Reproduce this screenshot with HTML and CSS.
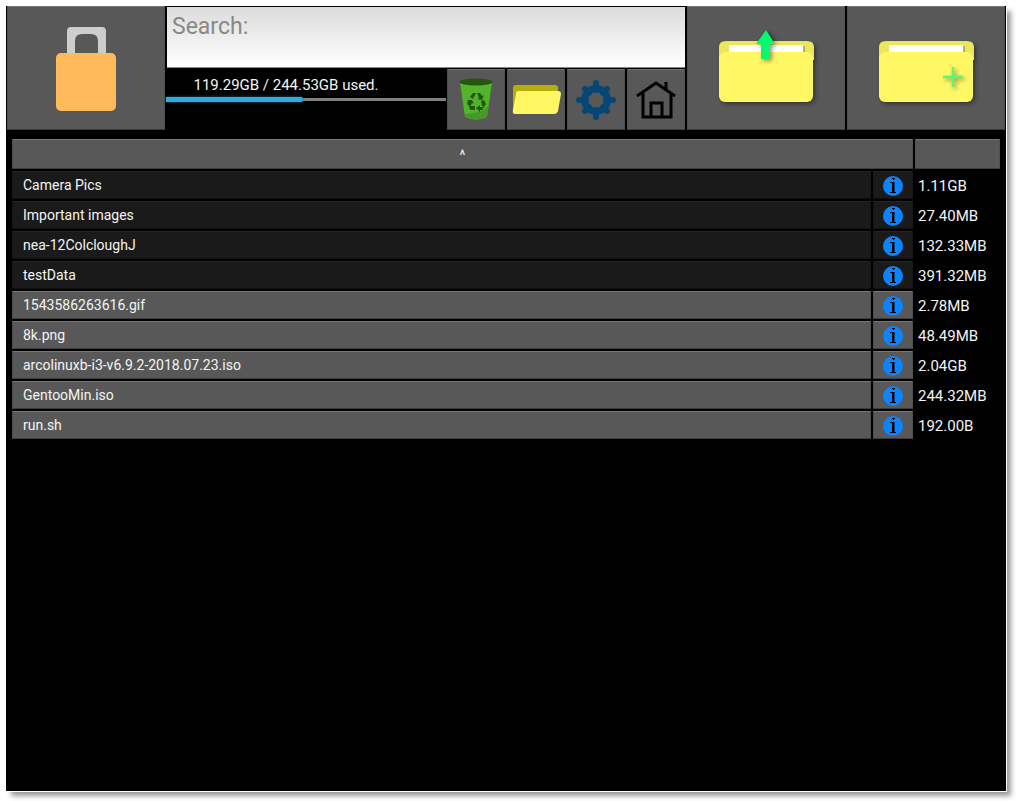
FILE: index.html
```
<!DOCTYPE html>
<html lang="en">
<head>
<meta charset="utf-8">
<title>File browser</title>
<link rel="stylesheet" href="styles.css">
</head>
<body>
<svg class="defs" aria-hidden="true">
  <symbol id="info" viewBox="0 0 20 20">
    <circle cx="10" cy="10" r="10" fill="#0a84ff"/>
    <path d="M9 2h3v1h-1v1h-1V3H9zM7 6h4.500v10H13v1H7v-1h2V7H7z" fill="#000"/>
  </symbol>
  <symbol id="folder" viewBox="0 0 96 66">
    <path d="M0 20V7q0-6 7-6h81q7 0 7 6v13z" fill="#ebe65c"/>
    <path d="M12 6h74v10H12z" fill="#b9b44c"/>
    <path d="M10 5h74v12H10z" fill="#fff"/>
    <rect y="12" width="94" height="50" rx="6" fill="#fff764"/>
  </symbol>
</svg>
<main class="app">
  <header class="toolbar">
    <button class="btn large" aria-label="Lock">
      <svg width="60" height="84" viewBox="0 0 60 84"><path d="M11 28V4q0-4 4-4h31q4 0 4 4v24h-8V14q0-7-7-7H26q-7 0-7 7v14z" fill="#cdcdcd"/><rect y="26" width="60" height="58" rx="5" fill="#ffbb5b"/></svg>
    </button>
    <div class="middle">
      <input class="search" type="text" placeholder="Search:" aria-label="Search">
      <div class="tools">
        <div class="usage">
          <label class="usage-text" for="space">119.29GB / 244.53GB used.</label>
          <progress id="space" class="bar" value="119.29" max="244.53"></progress>
        </div>
        <button class="btn" aria-label="Recycle bin">
          <svg width="34" height="44" viewBox="0 0 34 44"><path d="M1 4h32l-5 35q-11 5-22 0z" fill="#51b42b"/><path d="M30 26q-4 9-24 10v3q11 5 22 0z" fill="#44992a"/><ellipse cx="17" cy="4" rx="16.500" ry="3.500" fill="#26550f"/><path d="M14 15h3l-3 6-3-2zM18 15h3l2 3 2-1-2 5-5-1 2-1zM8 22l5 0 2 4-2-1-2 4-3-3 1-3zM22 23l3-1 2 4-2 3-2-1zM10 28h6v4h-4q-2-1-2-4zM17 30l4-3v2h4l-2 3h-2v2z" fill="#26550f"/></svg>
        </button>
        <button class="btn" aria-label="Open folder">
          <svg width="50" height="30" viewBox="0 0 50 30"><path d="M2 28V3q0-3 3-3h39q3 0 3 3v7z" fill="#b7ad08"/><path d="M7 6h40q3 0 3 3l-3 17q-1 3-4 3H4q-3 0-2-4L5 9q0-3 2-3z" fill="#fff764"/></svg>
        </button>
        <button class="btn" aria-label="Settings">
          <svg width="40" height="40" viewBox="0 0 40 40"><g stroke="#064775" stroke-width="6"><path d="M20 3v7M20 30v7M3 20h7M30 20h7M9 9l4 4M27 27l4 4M31 9l-4 4M9 31l4-4" stroke-linecap="round"/><circle cx="20" cy="20" r="11.500" fill="none" stroke-width="7"/></g></svg>
        </button>
        <button class="btn" aria-label="Home">
          <svg width="40" height="38" viewBox="0 0 40 38"><path d="M1 15L20 2l19 13M7 12v24h28V12M15 36V22h11v14M30 1v8" fill="none" stroke="#000" stroke-width="3"/></svg>
        </button>
      </div>
    </div>
    <button class="btn large" aria-label="Upload">
      <svg class="shade" width="94" height="78" viewBox="0 0 94 78"><use href="#folder" y="10" width="96" height="66"/><path class="shade" d="M47 0l9 14h-5v15h-9V14h-5z" fill="#00fa70"/></svg>
    </button>
    <button class="btn large" aria-label="New folder">
      <svg class="shade" width="94" height="78" viewBox="0 0 94 78"><use href="#folder" y="10" width="96" height="66"/><path class="shade" d="M64 47h20M74 37v20" stroke="#59f879" stroke-width="2.500"/></svg>
    </button>
  </header>
  <table class="files">
    <colgroup><col><col class="col-info"><col class="col-size"></colgroup>
    <thead><tr><th colspan="2"><button class="btn sort">^</button></th><th><button class="btn sort" aria-label="Sort by size"></button></th></tr></thead>
    <tbody>
      <tr class="dir"><td><button class="btn name">Camera Pics</button></td><td><button class="btn info" aria-label="Info"><svg width="20" height="20"><use href="#info"/></svg></button></td><td class="size">1.11GB</td></tr>
      <tr class="dir"><td><button class="btn name">Important images</button></td><td><button class="btn info" aria-label="Info"><svg width="20" height="20"><use href="#info"/></svg></button></td><td class="size">27.40MB</td></tr>
      <tr class="dir"><td><button class="btn name">nea-12ColcloughJ</button></td><td><button class="btn info" aria-label="Info"><svg width="20" height="20"><use href="#info"/></svg></button></td><td class="size">132.33MB</td></tr>
      <tr class="dir"><td><button class="btn name">testData</button></td><td><button class="btn info" aria-label="Info"><svg width="20" height="20"><use href="#info"/></svg></button></td><td class="size">391.32MB</td></tr>
      <tr><td><button class="btn name">1543586263616.gif</button></td><td><button class="btn info" aria-label="Info"><svg width="20" height="20"><use href="#info"/></svg></button></td><td class="size">2.78MB</td></tr>
      <tr><td><button class="btn name">8k.png</button></td><td><button class="btn info" aria-label="Info"><svg width="20" height="20"><use href="#info"/></svg></button></td><td class="size">48.49MB</td></tr>
      <tr><td><button class="btn name">arcolinuxb-i3-v6.9.2-2018.07.23.iso</button></td><td><button class="btn info" aria-label="Info"><svg width="20" height="20"><use href="#info"/></svg></button></td><td class="size">2.04GB</td></tr>
      <tr><td><button class="btn name">GentooMin.iso</button></td><td><button class="btn info" aria-label="Info"><svg width="20" height="20"><use href="#info"/></svg></button></td><td class="size">244.32MB</td></tr>
      <tr><td><button class="btn name">run.sh</button></td><td><button class="btn info" aria-label="Info"><svg width="20" height="20"><use href="#info"/></svg></button></td><td class="size">192.00B</td></tr>
    </tbody>
  </table>
</main>
</body>
</html>
```
FILE: styles.css
```
* { box-sizing: border-box; }
body {
  margin: 0;
  padding: 6px 10px 10px 6px;
  background: #fff;
  color: #f4f4f4;
  font: 15px/18px Roboto, sans-serif;
}
.defs { display: none; }
.app {
  min-height: calc(100vh - 16px);
  background: #000;
  box-shadow: 0 0 0 1px #fff, 5px 5px 5px 0 #999;
}
.btn {
  display: flex;
  align-items: center;
  justify-content: center;
  width: 100%;
  padding: 0;
  border: 1px solid #505050;
  border-top-color: #777;
  border-bottom-color: #3c3c3c;
  border-radius: 1px;
  background: #585858;
  color: #f4f4f4;
  font: inherit;
}
.toolbar {
  display: grid;
  grid-template-columns: 158px 1fr 158px 158px;
  gap: 2px;
  padding: 0 1px;
  height: 124px;
}
.large { padding-top: 2px; }
.middle { display: grid; grid-template-rows: 61px 61px; gap: 1px; padding-top: 1px; }
.search {
  width: 100%;
  padding: 6px 5px 26px;
  border: 0;
  border-bottom: 1px solid #888;
  border-radius: 0;
  background: linear-gradient(#dcdcdc, #fff);
  color: #222;
  font: 23px/28px Roboto, sans-serif;
}
.search::placeholder { color: #888; opacity: 1; }
.tools { display: grid; grid-template-columns: 1fr repeat(4, 58px); gap: 2px; }
.usage { margin-left: -1px; margin-right: -1px; padding-top: 7px; }
.usage-text { display: block; width: 240px; text-align: center; }
.bar {
  display: block;
  width: 100%;
  height: 5px;
  margin-top: 3px;
  border: 0;
  appearance: none;
  background: none;
}
.bar::-webkit-progress-bar { background: linear-gradient(#000 1px, #808080 1px, #808080 4px, #000 4px); }
.bar::-webkit-progress-value {
  border-radius: 0 2px 2px 0;
  background: #33a9dc;
  box-shadow: 0 0 3px #1c6b8c;
}
.shade { filter: drop-shadow(2px 2px 2px rgba(0, 0, 0, 0.4)); overflow: visible; }
.files {
  width: calc(100% - 8px);
  margin: 7px 4px 0;
  border-spacing: 2px;
  table-layout: fixed;
}
.files th, .files td { padding: 0; font-weight: 400; }
.col-info { width: 40px; }
.col-size { width: 85px; }
.sort { height: 30px; padding-top: 2px; font-size: 14px; }
.name { height: 28px; padding-left: 10px; justify-content: flex-start; font-size: 14px; }
.info { height: 28px; padding-top: 2px; }
.dir .btn { background: #1a1a1a; border-color: #242424 #171717 #101010; }
.files .size { padding: 1px 0 0 3px; }
```
